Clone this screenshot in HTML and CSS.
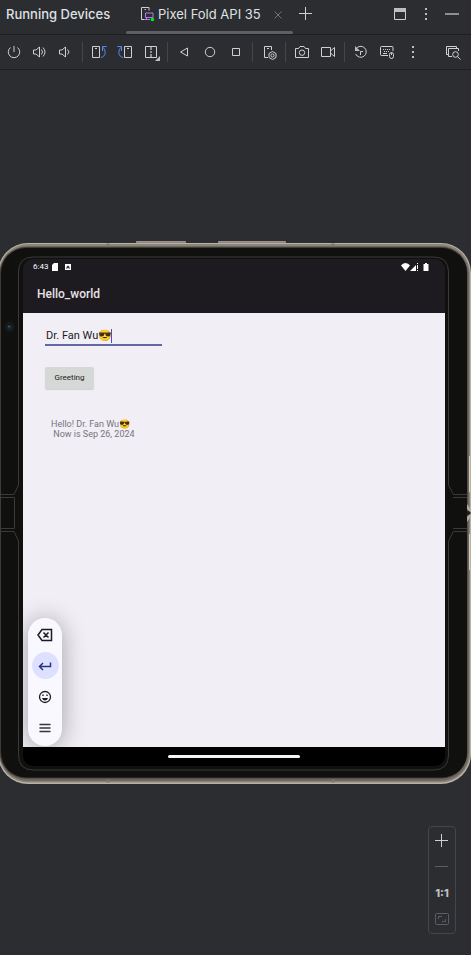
FILE: index.html
```html
<!DOCTYPE html>
<html lang="en">
<head>
<meta charset="utf-8">
<meta name="viewport" content="width=device-width, initial-scale=1">
<title>Running Devices</title>
<link rel="stylesheet" href="styles.css">
</head>
<body>
<header class="tabs">
  <h1 class="tabs-title">Running Devices</h1>
  <div class="tab">
    <svg class="icon" viewBox="0 0 16 16"><path class="l" d="M5.500 13.500h-3v-12h7.500v3M5.500 3.500h1.500"/><g stroke="#b07cf0" fill="none"><path d="M6.500 7h7.500v4.500H6.500zM5 13.500h6M7.500 11.500v2"/></g><circle cx="13.500" cy="13.500" r="1.800" fill="#00e61a"/></svg>
    <span class="tab-name">Pixel Fold API 35</span>
    <button class="close" aria-label="Close tab"><svg class="icon" viewBox="0 0 16 16"><path d="M4.500 5.500l7 7M11.500 5.500l-7 7" stroke="#6f737a"/></svg></button>
  </div>
  <button class="tool" aria-label="New tab"><svg class="icon" viewBox="0 0 16 16"><path class="l" d="M7.500 1v13M1 7.500h13"/></svg></button>
  <div class="window-tools">
    <button class="tool" aria-label="View mode"><svg class="icon" viewBox="0 0 16 16"><path class="l" d="M2.500 2.500h11v11h-11z"/><path class="f" d="M2 2h12v4H2z"/></svg></button>
    <button class="tool" aria-label="Options"><svg class="icon" viewBox="0 0 16 16"><path class="f" d="M7 2h2v2H7zM7 7h2v2H7zM7 12h2v2H7z"/></svg></button>
    <button class="tool" aria-label="Hide"><svg class="icon" viewBox="0 0 16 16"><path d="M1 8h14" stroke="#8c8f94" stroke-width="2"/></svg></button>
  </div>
</header>
<nav class="toolbar" aria-label="Device controls">
  <button class="tool" aria-label="Power"><svg class="icon" viewBox="0 0 16 16"><path class="l" d="M8 2v6M4.500 3.500a5.700 5.700 0 1 0 7 0"/></svg></button>
  <button class="tool" aria-label="Volume up"><svg class="icon" viewBox="0 0 16 16"><path class="l" d="M1.500 6v4h2.500l3.500 3V3L4 6zM9.500 5.500q2 2.500 0 5M11 3.500q4 4.500 0 9"/></svg></button>
  <button class="tool" aria-label="Volume down"><svg class="icon" viewBox="0 0 16 16"><path class="l" d="M1.500 6v4h2.500l3.500 3V3L4 6zM9.500 5.500q3 2.500 0 5"/></svg></button>
  <i class="sep"></i>
  <button class="tool" aria-label="Rotate left"><svg class="icon" viewBox="0 0 16 16"><path class="l" d="M1.500 2.500h7v11h-7zM4 4.500h2"/><path class="b" d="M10 13.500c5-1 5.500-7 1.500-10.500M11.500 7V2.500h4"/></svg></button>
  <button class="tool" aria-label="Rotate right"><svg class="icon" viewBox="0 0 16 16"><path class="l" d="M7.500 2.500h7v11h-7zM10 4.500h2"/><path class="b" d="M6 13.500c-5-1-5.500-7-1.500-10.500M4.500 7V2.500h-4"/></svg></button>
  <button class="tool" aria-label="Fold posture"><svg class="icon" viewBox="0 0 16 16"><path class="l" d="M2.500 2.500h11v11h-11z"/><path class="l" d="M8 3v3M8 7v2M8 10v3" stroke-width="2" opacity=".6"/><path class="f" d="M17 12v5h-5z"/></svg></button>
  <i class="sep"></i>
  <button class="tool" aria-label="Back"><svg class="icon" viewBox="0 0 16 16"><path class="l" d="M11.500 4v8L4.500 8z"/></svg></button>
  <button class="tool" aria-label="Home"><svg class="icon" viewBox="0 0 16 16"><circle class="l" cx="8" cy="8" r="4.700"/></svg></button>
  <button class="tool" aria-label="Overview"><svg class="icon" viewBox="0 0 16 16"><path class="l" d="M4.500 4.500h7v7h-7z"/></svg></button>
  <i class="sep"></i>
  <button class="tool" aria-label="Device settings"><svg class="icon" viewBox="0 0 16 16"><path class="l" d="M7 13.500H3.500v-11h7V6M6 4.500h2M11.500 7.500l3.500 2v4l-3.500 2-3.500-2v-4z"/><circle class="l" cx="11.500" cy="11.500" r="1.600"/></svg></button>
  <i class="sep"></i>
  <button class="tool" aria-label="Screenshot"><svg class="icon" viewBox="0 0 16 16"><path class="l" d="M1.500 4.500h3l1.500-2h4l1.500 2h3v9h-13z"/><circle class="l" cx="8" cy="8.700" r="2.700"/></svg></button>
  <button class="tool" aria-label="Record screen"><svg class="icon" viewBox="0 0 16 16"><path class="l" d="M1.500 3.500h9v9h-9zM10.500 7l4-3.500v9l-4-3.500"/></svg></button>
  <i class="sep"></i>
  <button class="tool" aria-label="Snapshots"><svg class="icon" viewBox="0 0 16 16"><path class="l" d="M3 5a5.500 5.500 0 1 1-.3 5M7.500 11V7.500H10"/><path class="f" d="M2 2v5h5z"/></svg></button>
  <button class="tool" aria-label="Hardware input"><svg class="icon" viewBox="0 0 16 16"><path class="l" d="M9 11.500H2.500q-1 0-1-1v-7q0-1 1-1h10.500q1 0 1 1V7M4 9.500h4"/><path class="l" d="M4 5.500h8M5 7.500h6" stroke-dasharray="1 1"/><rect class="l" x="10.500" y="8.500" width="4" height="6" rx="2"/><path class="l" d="M12.500 9v2"/></svg></button>
  <button class="tool" aria-label="More"><svg class="icon" viewBox="0 0 16 16"><path class="f" d="M7 2h2v2H7zM7 7h2v2H7zM7 12h2v2H7z"/></svg></button>
  <button class="tool last" aria-label="Layout inspector"><svg class="icon" viewBox="0 0 16 16"><path class="l" d="M3.500 10.500h-2v-8h10v2M7 12.500H3.500v-8h10V7"/><circle class="l" cx="10.500" cy="10.500" r="2.800"/><path class="l" d="M12.500 12.500l3 3"/></svg></button>
</nav>
<main class="stage">
  <section class="device" aria-label="Pixel Fold">
    <svg class="shell" viewBox="0 0 471 543" preserveAspectRatio="none" aria-hidden="true">
      <path d="M136 0h50v3h-50zM218 0h68v3h-68z" fill="#8d837c"/>
      <path d="M137 .5h48M219 .5h66" stroke="#a0958e"/>
      <rect x="-2" y="2" width="473" height="541" rx="30" fill="#b9b2a6"/>
      <rect x="-1" y="3" width="471" height="538.500" rx="29" fill="#8b847a"/>
      <rect x="-.500" y="5" width="469.500" height="535" rx="28" fill="#6d675f"/>
      <rect x="0" y="6" width="467.500" height="531.500" rx="26" fill="#3f3b37"/>
      <rect x="1" y="7" width="466" height="529.500" rx="25" fill="#10100f"/>
      <path d="M108 2.500v3M333 2.500v3M108 538.500v3M333 538.500v3" stroke="#7e776e" stroke-width="3"/>
      <path d="M18.500 244V31q0-15 15-15h400q15 0 15 15v213l5 9.500h14M0 253.500h14l4.500-9.500M0 256.500h14.500v31H0M0 290.500h14l4.500 9.500v214q0 15 15 15h400q15 0 15-15V300l5-9.500h14M453 256.500h14M453 287.500h14" fill="none" stroke="#393a3a"/>
      <path d="M467 270h4v4h-4z" fill="#1c2022"/>
      <path d="M471 269l-4-6v5l4 4zM471 275l-4 6v-5l4-4z" fill="#b5aa9d"/>
      <path d="M469.500 215v36M469.500 293v36" stroke="#d9cbb9"/>
      <circle cx="9.500" cy="86" r="5" fill="#171a1d"/><circle cx="9.500" cy="86" r="2" fill="#1f2d3e"/><circle cx="9" cy="85.500" r=".8" fill="#4a6785"/>
    </svg>
    <div class="screen">
      <div class="status">
        <span>6:43</span>
        <svg class="s-icon" viewBox="0 0 8 8"><path d="M3 0h4v8H1V2z"/></svg>
        <svg class="s-icon gap" viewBox="0 0 8 8"><path d="M1 1h6v6H1z"/><path d="M2.500 6V4L4 2.500 5.500 4v2H4.700V4.800H3.300V6z" fill="#1d1b20"/></svg>
        <span class="radio">
          <svg class="r-icon" viewBox="0 0 9 8"><path d="M0 2.500Q1.500 0 4.500 0T9 2.500L4.500 8z"/></svg>
          <svg class="r-icon" viewBox="0 0 9 8"><path d="M0 8L6 2v6zM7 0h1v1H7zM7 2h1v4H7zM7 7h1v1H7z"/></svg>
          <svg class="s-icon" viewBox="0 0 8 8"><path d="M1.500 1h1.500V0h2v1h1.500v7h-5z"/></svg>
        </span>
      </div>
      <h2 class="appbar">Hello_world</h2>
      <div class="content">
        <div class="field"><input class="name" aria-label="Name" value="Dr. Fan Wu😎"><i class="caret"></i></div>
        <button class="greet">Greeting</button>
        <p class="message">Hello! Dr. Fan Wu😎
 Now is Sep 26, 2024</p>
        <div class="keys">
          <button class="key" aria-label="Backspace"><svg class="icon" viewBox="0 0 16 16"><path d="M5 2.500h9.500v11H5L1 8zM6.500 5.500l5 5M11.500 5.500l-5 5"/></svg></button>
          <button class="key enter" aria-label="Enter"><svg class="icon" viewBox="0 0 16 16"><path d="M13.500 4.500v4H3M6 5L2.500 8.500 6 12"/></svg></button>
          <button class="key" aria-label="Emoji"><svg class="icon" viewBox="0 0 16 16"><circle cx="8" cy="8" r="5.500" stroke-width="1.300"/><path d="M6 5.500v1.500M10 5.500v1.500" stroke-width="1.400"/><path d="M5 9h6Q10.300 11.600 8 11.600T5 9z" fill="#1b1b20" stroke="none"/></svg></button>
          <button class="key" aria-label="Menu"><svg class="icon" viewBox="0 0 16 16"><path d="M2.500 4.500h11M2.500 8h11M2.500 11.500h11" stroke="#35353c"/></svg></button>
        </div>
      </div>
      <div class="navbar"><i class="handle"></i></div>
    </div>
  </section>
  <div class="zoom">
    <button class="tool" aria-label="Zoom in"><svg class="icon" viewBox="0 0 16 16"><path class="l" d="M7.500 1v13M1 7.500h13"/></svg></button>
    <button class="tool" aria-label="Zoom out"><svg class="icon" viewBox="0 0 16 16"><path d="M1 7.500h13" stroke="#5a5d63"/></svg></button>
    <button class="tool actual">1:1</button>
    <button class="tool" aria-label="Fit to screen"><svg class="icon" viewBox="0 0 16 16"><g fill="none" stroke="#5a5d63"><rect x="1.500" y="2.500" width="13" height="11" rx="1"/><path d="M4.500 8V5.500H8M11.500 8v2.500H8"/></g></svg></button>
  </div>
</main>
</body>
</html>
```
FILE: styles.css
```css
* { box-sizing: border-box; }
body {
  margin: 0;
  min-height: 100vh;
  display: flex;
  flex-direction: column;
  background: #2b2d30;
  color: #dfe1e5;
  font: 13px/20px Inter, "Liberation Sans", sans-serif;
}
button {
  margin: 0;
  padding: 0;
  border: 0;
  background: none;
  color: inherit;
  font: inherit;
}
h1, h2, p { margin: 0; font: inherit; }
.icon { display: block; width: 16px; height: 16px; fill: none; overflow: visible; flex: none; }
.l { fill: none; stroke: #ced0d6; }
.b { fill: none; stroke: #548af7; }
.f { fill: #bcbec4; }
.tool {
  display: flex;
  align-items: center;
  justify-content: center;
  width: 26px;
  height: 28px;
  flex: none;
}

.tabs {
  display: flex;
  align-items: center;
  height: 35px;
  padding: 0 6px 6px 6px;
  border-bottom: 1px solid #1e1f22;
}
.tabs-title { width: 120px; font-weight: 500; white-space: nowrap; flex: none; }
.tab {
  display: flex;
  align-items: center;
  align-self: stretch;
  width: 167px;
  margin-bottom: -6px;
  padding: 0 7px 6px 13px;
  position: relative;
  flex: none;
}
.tab::after {
  content: "";
  position: absolute;
  inset: auto 0 0 0;
  height: 3px;
  border-radius: 2px;
  background: #5d5e66;
}
.tab-name { margin-left: 3px; white-space: nowrap; }
.close { margin-left: auto; }
.window-tools { display: flex; margin-left: auto; }

.toolbar {
  display: flex;
  align-items: center;
  height: 35px;
  padding: 0 5px 0 1px;
  border-bottom: 1px solid #1e1f22;
}
.sep { width: 1px; height: 20px; margin: 0 3px; background: #43454a; flex: none; }
.last { margin-left: auto; }

.stage {
  position: relative;
  flex: 1;
  display: flex;
  align-items: center;
}
.device { position: relative; width: 100%; padding: 18px 26px 18px 23px; }
.shell { position: absolute; inset: 0; width: 100%; height: 100%; }
.screen {
  position: relative;
  border-radius: 10px;
  overflow: hidden;
  background: #1d1b20;
  color: #fff;
  font-family: Roboto, sans-serif;
}
.status {
  display: flex;
  align-items: center;
  height: 16px;
  padding: 0 15px 0 10px;
  font-size: 8px;
  line-height: 8px;
}
.s-icon, .r-icon { width: 8px; height: 8px; margin-left: 3px; fill: #fff; }
.r-icon { width: 9px; margin-left: 0; }
.gap { margin-left: 5px; }
.radio { display: flex; margin-left: auto; }
.appbar {
  height: 38px;
  padding: 0 14px;
  font-size: 12px;
  font-weight: 500;
  line-height: 38px;
  color: #e6e1e5;
}
.content {
  position: relative;
  height: 434px;
  padding: 14px 22px;
  background: #f1eef6;
}
.field {
  display: flex;
  align-items: flex-end;
  position: relative;
  width: 117px;
  height: 19px;
  border-bottom: 2px solid #6069a6;
}
.name {
  width: 100%;
  padding: 0 0 0 1px;
  border: 0;
  outline: 0;
  background: none;
  color: #1d1b20;
  font: 11px/16px Roboto, "Noto Color Emoji", sans-serif;
}
.caret { position: absolute; left: 66px; top: 2px; width: 1px; height: 14px; background: #4355b9; }
.greet {
  display: block;
  width: 49px;
  height: 22px;
  margin-top: 21px;
  border-radius: 2px;
  background: #d6d7d7;
  box-shadow: 0 1px 1px #0002;
  color: #1d1b20;
  font: 8px/22px Roboto, sans-serif;
}
.message {
  margin: 30px 0 0 6px;
  color: #77757c;
  font: 9px/10px Roboto, "Noto Color Emoji", sans-serif;
  white-space: pre;
}
.keys {
  position: absolute;
  left: 5px;
  bottom: 1px;
  display: flex;
  flex-direction: column;
  align-items: center;
  gap: 4px;
  padding: 3px 3px 5px;
  width: 34px;
  border-radius: 17px;
  background: #faf8ff;
  box-shadow: 0 2px 24px #0005;
}
.key {
  display: flex;
  align-items: center;
  justify-content: center;
  width: 27px;
  height: 27px;
  border-radius: 50%;
}
.key .icon { stroke: #1b1b20; stroke-width: 1.5; }
.enter { background: #dde1ff; }
.enter .icon { stroke: #29347a; }
.navbar { display: flex; align-items: center; justify-content: center; height: 19px; background: #000; }
.handle { width: 132px; height: 3px; border-radius: 2px; background: #f4f4f4; }

.zoom {
  position: absolute;
  right: 15px;
  bottom: 21px;
  display: flex;
  flex-direction: column;
  padding: 1px 0;
  border: 1px solid #43454a;
  border-radius: 4px;
}
.zoom .tool { height: 26px; }
.actual { color: #bcbec4; font-size: 11px; font-weight: 800; }
```
